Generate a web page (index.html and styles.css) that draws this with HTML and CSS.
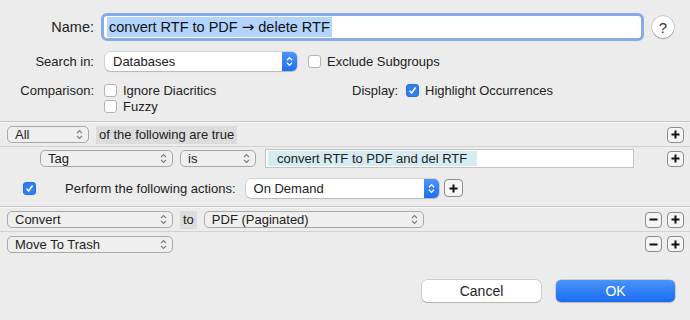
FILE: index.html
```html
<!DOCTYPE html>
<html lang="en">
<head>
    <meta charset="UTF-8">
    <title>Smart Rule</title>
    <link rel="stylesheet" href="styles.css">
</head>
<body>
    <div class="dialog">
        <!-- Name / search options -->
        <div class="row name-row">
            <span class="label big">Name:</span>
            <div class="name-field"><span class="selected">convert RTF to PDF <span class="arrow">→</span> delete RTF</span></div>
            <div class="help">?</div>
        </div>

        <div class="row search-row">
            <span class="label">Search in:</span>
            <div class="popup white wide">
                <span>Databases</span>
                <span class="stepper"><svg width="7" height="11" viewBox="0 0 7 11"><path d="M1 4.2 L3.5 1.6 L6 4.2 M1 6.8 L3.5 9.4 L6 6.8" fill="none" stroke="#fff" stroke-width="1.3"/></svg></span>
            </div>
            <span class="check"></span>
            <span class="check-text">Exclude Subgroups</span>
        </div>

        <div class="row compare-row">
            <span class="label">Comparison:</span>
            <div class="options">
                <div class="option"><span class="check"></span><span class="check-text">Ignore Diacritics</span></div>
                <div class="option"><span class="check"></span><span class="check-text">Fuzzy</span></div>
            </div>
            <span class="display-label">Display:</span>
            <span class="check on"><svg width="9" height="9" viewBox="0 0 9 9"><path d="M1.5 4.8 L3.6 7 L7.6 1.6" fill="none" stroke="#fff" stroke-width="1.6"/></svg></span>
            <span class="check-text">Highlight Occurrences</span>
        </div>

        <!-- Conditions -->
        <div class="rules">
            <div class="rule-row all-row">
                <div class="popup w-all"><span>All</span><svg class="chev" width="7" height="11" viewBox="0 0 7 11"><path d="M1 4.2 L3.5 1.6 L6 4.2 M1 6.8 L3.5 9.4 L6 6.8" fill="none" stroke="#777" stroke-width="1.1"/></svg></div>
                <span class="tag-text">of the following are true</span>
                <div class="spacer"></div>
                <div class="mini"><svg width="9" height="9" viewBox="0 0 9 9"><path d="M4.5 0.5 V8.5 M0.5 4.5 H8.5" stroke="#111" stroke-width="2"/></svg></div>
            </div>
            <div class="rule-row tag-row">
                <div class="popup w-tag"><span>Tag</span><svg class="chev" width="7" height="11" viewBox="0 0 7 11"><path d="M1 4.2 L3.5 1.6 L6 4.2 M1 6.8 L3.5 9.4 L6 6.8" fill="none" stroke="#777" stroke-width="1.1"/></svg></div>
                <div class="popup w-is"><span>is</span><svg class="chev" width="7" height="11" viewBox="0 0 7 11"><path d="M1 4.2 L3.5 1.6 L6 4.2 M1 6.8 L3.5 9.4 L6 6.8" fill="none" stroke="#777" stroke-width="1.1"/></svg></div>
                <div class="text-field"><span class="token">convert RTF to PDF and del RTF</span></div>
                <div class="spacer"></div>
                <div class="mini"><svg width="9" height="9" viewBox="0 0 9 9"><path d="M4.5 0.5 V8.5 M0.5 4.5 H8.5" stroke="#111" stroke-width="2"/></svg></div>
            </div>
            <div class="rule-row perform-row">
                <span class="check on"><svg width="9" height="9" viewBox="0 0 9 9"><path d="M1.5 4.8 L3.6 7 L7.6 1.6" fill="none" stroke="#fff" stroke-width="1.6"/></svg></span>
                <span class="perform-text">Perform the following actions:</span>
                <div class="popup white w-demand">
                    <span>On Demand</span>
                    <span class="stepper"><svg width="7" height="11" viewBox="0 0 7 11"><path d="M1 4.2 L3.5 1.6 L6 4.2 M1 6.8 L3.5 9.4 L6 6.8" fill="none" stroke="#fff" stroke-width="1.3"/></svg></span>
                </div>
                <div class="mini big-mini"><svg width="9" height="9" viewBox="0 0 9 9"><path d="M4.5 0.5 V8.5 M0.5 4.5 H8.5" stroke="#111" stroke-width="2"/></svg></div>
            </div>
        </div>

        <!-- Actions -->
        <div class="actions">
            <div class="rule-row action-row">
                <div class="popup w-action"><span>Convert</span><svg class="chev" width="7" height="11" viewBox="0 0 7 11"><path d="M1 4.2 L3.5 1.6 L6 4.2 M1 6.8 L3.5 9.4 L6 6.8" fill="none" stroke="#777" stroke-width="1.1"/></svg></div>
                <span class="tag-text to">to</span>
                <div class="popup w-pdf"><span>PDF (Paginated)</span><svg class="chev" width="7" height="11" viewBox="0 0 7 11"><path d="M1 4.2 L3.5 1.6 L6 4.2 M1 6.8 L3.5 9.4 L6 6.8" fill="none" stroke="#777" stroke-width="1.1"/></svg></div>
                <div class="spacer"></div>
                <div class="mini"><svg width="9" height="9" viewBox="0 0 9 9"><path d="M0.5 4.5 H8.5" stroke="#111" stroke-width="2"/></svg></div>
                <div class="mini"><svg width="9" height="9" viewBox="0 0 9 9"><path d="M4.5 0.5 V8.5 M0.5 4.5 H8.5" stroke="#111" stroke-width="2"/></svg></div>
            </div>
            <div class="rule-row action-row last">
                <div class="popup w-action"><span>Move To Trash</span><svg class="chev" width="7" height="11" viewBox="0 0 7 11"><path d="M1 4.2 L3.5 1.6 L6 4.2 M1 6.8 L3.5 9.4 L6 6.8" fill="none" stroke="#777" stroke-width="1.1"/></svg></div>
                <div class="spacer"></div>
                <div class="mini"><svg width="9" height="9" viewBox="0 0 9 9"><path d="M0.5 4.5 H8.5" stroke="#111" stroke-width="2"/></svg></div>
                <div class="mini"><svg width="9" height="9" viewBox="0 0 9 9"><path d="M4.5 0.5 V8.5 M0.5 4.5 H8.5" stroke="#111" stroke-width="2"/></svg></div>
            </div>
        </div>

        <!-- Buttons -->
        <div class="buttons">
            <button class="btn">Cancel</button>
            <button class="btn primary">OK</button>
        </div>
    </div>
</body>
</html>
```

FILE: styles.css
```css
body {
    margin: 0;
    background: #ececec;
    font-family: 'Liberation Sans', Arial, sans-serif;
    font-size: 13px;
    color: #222;
    width: 690px;
    height: 320px;
    overflow: hidden;
}

.dialog {
    padding-top: 13px;
}

.row {
    display: flex;
    align-items: center;
}

.label {
    width: 94px;
    flex: none;
    text-align: right;
}

.label.big {
    font-size: 14.5px;
}

/* Name row */
.name-row {
    height: 28px;
}

.name-field {
    margin-left: 7px;
    width: 543px;
    height: 28px;
    box-sizing: border-box;
    border: 3px solid #87abea;
    border-radius: 6px;
    background: #fff;
    display: flex;
    align-items: center;
    padding-left: 3px;
}

.selected {
    background: #b3d4fd;
    font-size: 14.5px;
    line-height: 20px;
    padding: 0 2px 0 2px;
    color: #111;
}

.arrow {
    font-family: 'DejaVu Sans', sans-serif;
    font-size: 15px;
    line-height: 18px;
}

.help {
    margin-left: 8px;
    width: 22px;
    height: 22px;
    border-radius: 50%;
    background: #fff;
    box-shadow: 0 0 0 0.5px rgba(0, 0, 0, 0.25), 0 1px 1px rgba(0, 0, 0, 0.2);
    display: flex;
    align-items: center;
    justify-content: center;
    font-size: 15px;
    color: #333;
}

/* Search row */
.search-row {
    margin-top: 11px;
    height: 19px;
}

.search-row .popup {
    margin-left: 11px;
}

.search-row .check {
    margin-left: 11px;
}

.check {
    width: 13px;
    height: 13px;
    box-sizing: border-box;
    border: 1px solid #b5b5b5;
    border-radius: 3px;
    background: #fff;
    flex: none;
    display: flex;
    align-items: center;
    justify-content: center;
}

.check.on {
    background: #2f7cf6;
    border-color: #2a6fdf;
}

.check-text {
    margin-left: 6px;
}

/* Comparison row */
.compare-row {
    margin-top: 13px;
    align-items: flex-start;
}

.compare-row .label,
.display-label {
    line-height: 13px;
}

.options {
    margin-left: 10px;
    width: 248px;
    display: flex;
    flex-direction: column;
    gap: 3px;
}

.option {
    display: flex;
    align-items: center;
    height: 13px;
}

.display-label {
    width: 46px;
}

.compare-row .check.on {
    margin-left: 8px;
}

.compare-row > .check-text {
    line-height: 13px;
}

/* Popup buttons */
.popup {
    display: flex;
    align-items: center;
    justify-content: space-between;
    height: 17px;
    box-sizing: border-box;
    border: 1px solid #a8a8a8;
    border-radius: 5px;
    background: #efefef;
    padding: 0 5px 0 7px;
    flex: none;
}

.popup.white {
    border: none;
    background: #fff;
    box-shadow: 0 0 0 0.5px rgba(0, 0, 0, 0.22), 0 1px 1px rgba(0, 0, 0, 0.12);
    padding: 0 0 0 8px;
    height: 19px;
}

.stepper {
    width: 15px;
    align-self: stretch;
    background: linear-gradient(#4d95f9, #1e6ef2);
    border-radius: 0 5px 5px 0;
    display: flex;
    align-items: center;
    justify-content: center;
}

.wide { width: 192px; }
.w-all { width: 82px; }
.w-tag { width: 133px; margin-left: 33px; }
.w-is { width: 76px; margin-left: 7px; }
.w-action { width: 166px; }
.w-pdf { width: 220px; margin-left: 7px; }
.w-demand { width: 193px; margin-left: 10px; height: 20px; }

/* Rules area */
.rules {
    margin-top: 8px;
    border-top: 1px solid #c6c6c6;
    box-shadow: inset 0 1px 0 #f7f7f7;
}

.rule-row {
    display: flex;
    align-items: center;
    padding: 0 6px 0 7px;
    border-bottom: 1px solid #d2d2d2;
}

.spacer {
    flex: 1;
}

.all-row {
    height: 23px;
    padding-top: 1px;
}

.tag-text {
    margin-left: 7px;
    background: #dcdcdc;
    padding: 2px 3px;
    line-height: 14px;
}

.tag-row {
    height: 23px;
    border-bottom: none;
}

.text-field {
    margin-left: 9px;
    width: 369px;
    height: 19px;
    box-sizing: border-box;
    border: 1px solid #c3c3c3;
    background: #fff;
    display: flex;
    align-items: stretch;
    padding: 1px 2px;
}

.token {
    background: #d5eaf1;
    padding: 0 10px 0 9px;
    line-height: 15px;
}

.perform-row {
    height: 36px;
    padding-left: 23px;
    border-bottom: 1px solid #c6c6c6;
}

.perform-text {
    margin-left: 29px;
}

.big-mini {
    width: 19px !important;
    height: 18px !important;
    margin-left: 5px;
}

.mini {
    width: 17px;
    height: 16px;
    box-sizing: border-box;
    border: 1px solid #8c8c8c;
    border-radius: 4px;
    background: #f5f5f5;
    display: flex;
    align-items: center;
    justify-content: center;
    flex: none;
}

.mini + .mini {
    margin-left: 5px;
}

.actions {
    border-top: 1px solid #f7f7f7;
}

.action-row {
    height: 23px;
}

.action-row.last {
    height: 24px;
    border-bottom: none;
}

/* Bottom buttons */
.buttons {
    display: flex;
    justify-content: flex-end;
    gap: 15px;
    padding-right: 15px;
    margin-top: 24px;
}

.btn {
    width: 119px;
    height: 22px;
    border: none;
    border-radius: 5px;
    background: #fff;
    box-shadow: 0 0 0 0.5px rgba(0, 0, 0, 0.25), 0 1px 1px rgba(0, 0, 0, 0.12);
    font-family: 'Liberation Sans', Arial, sans-serif;
    font-size: 14px;
    color: #222;
}

.btn.primary {
    background: linear-gradient(#4a94fa, #1a6cf3);
    color: #fff;
}
```
